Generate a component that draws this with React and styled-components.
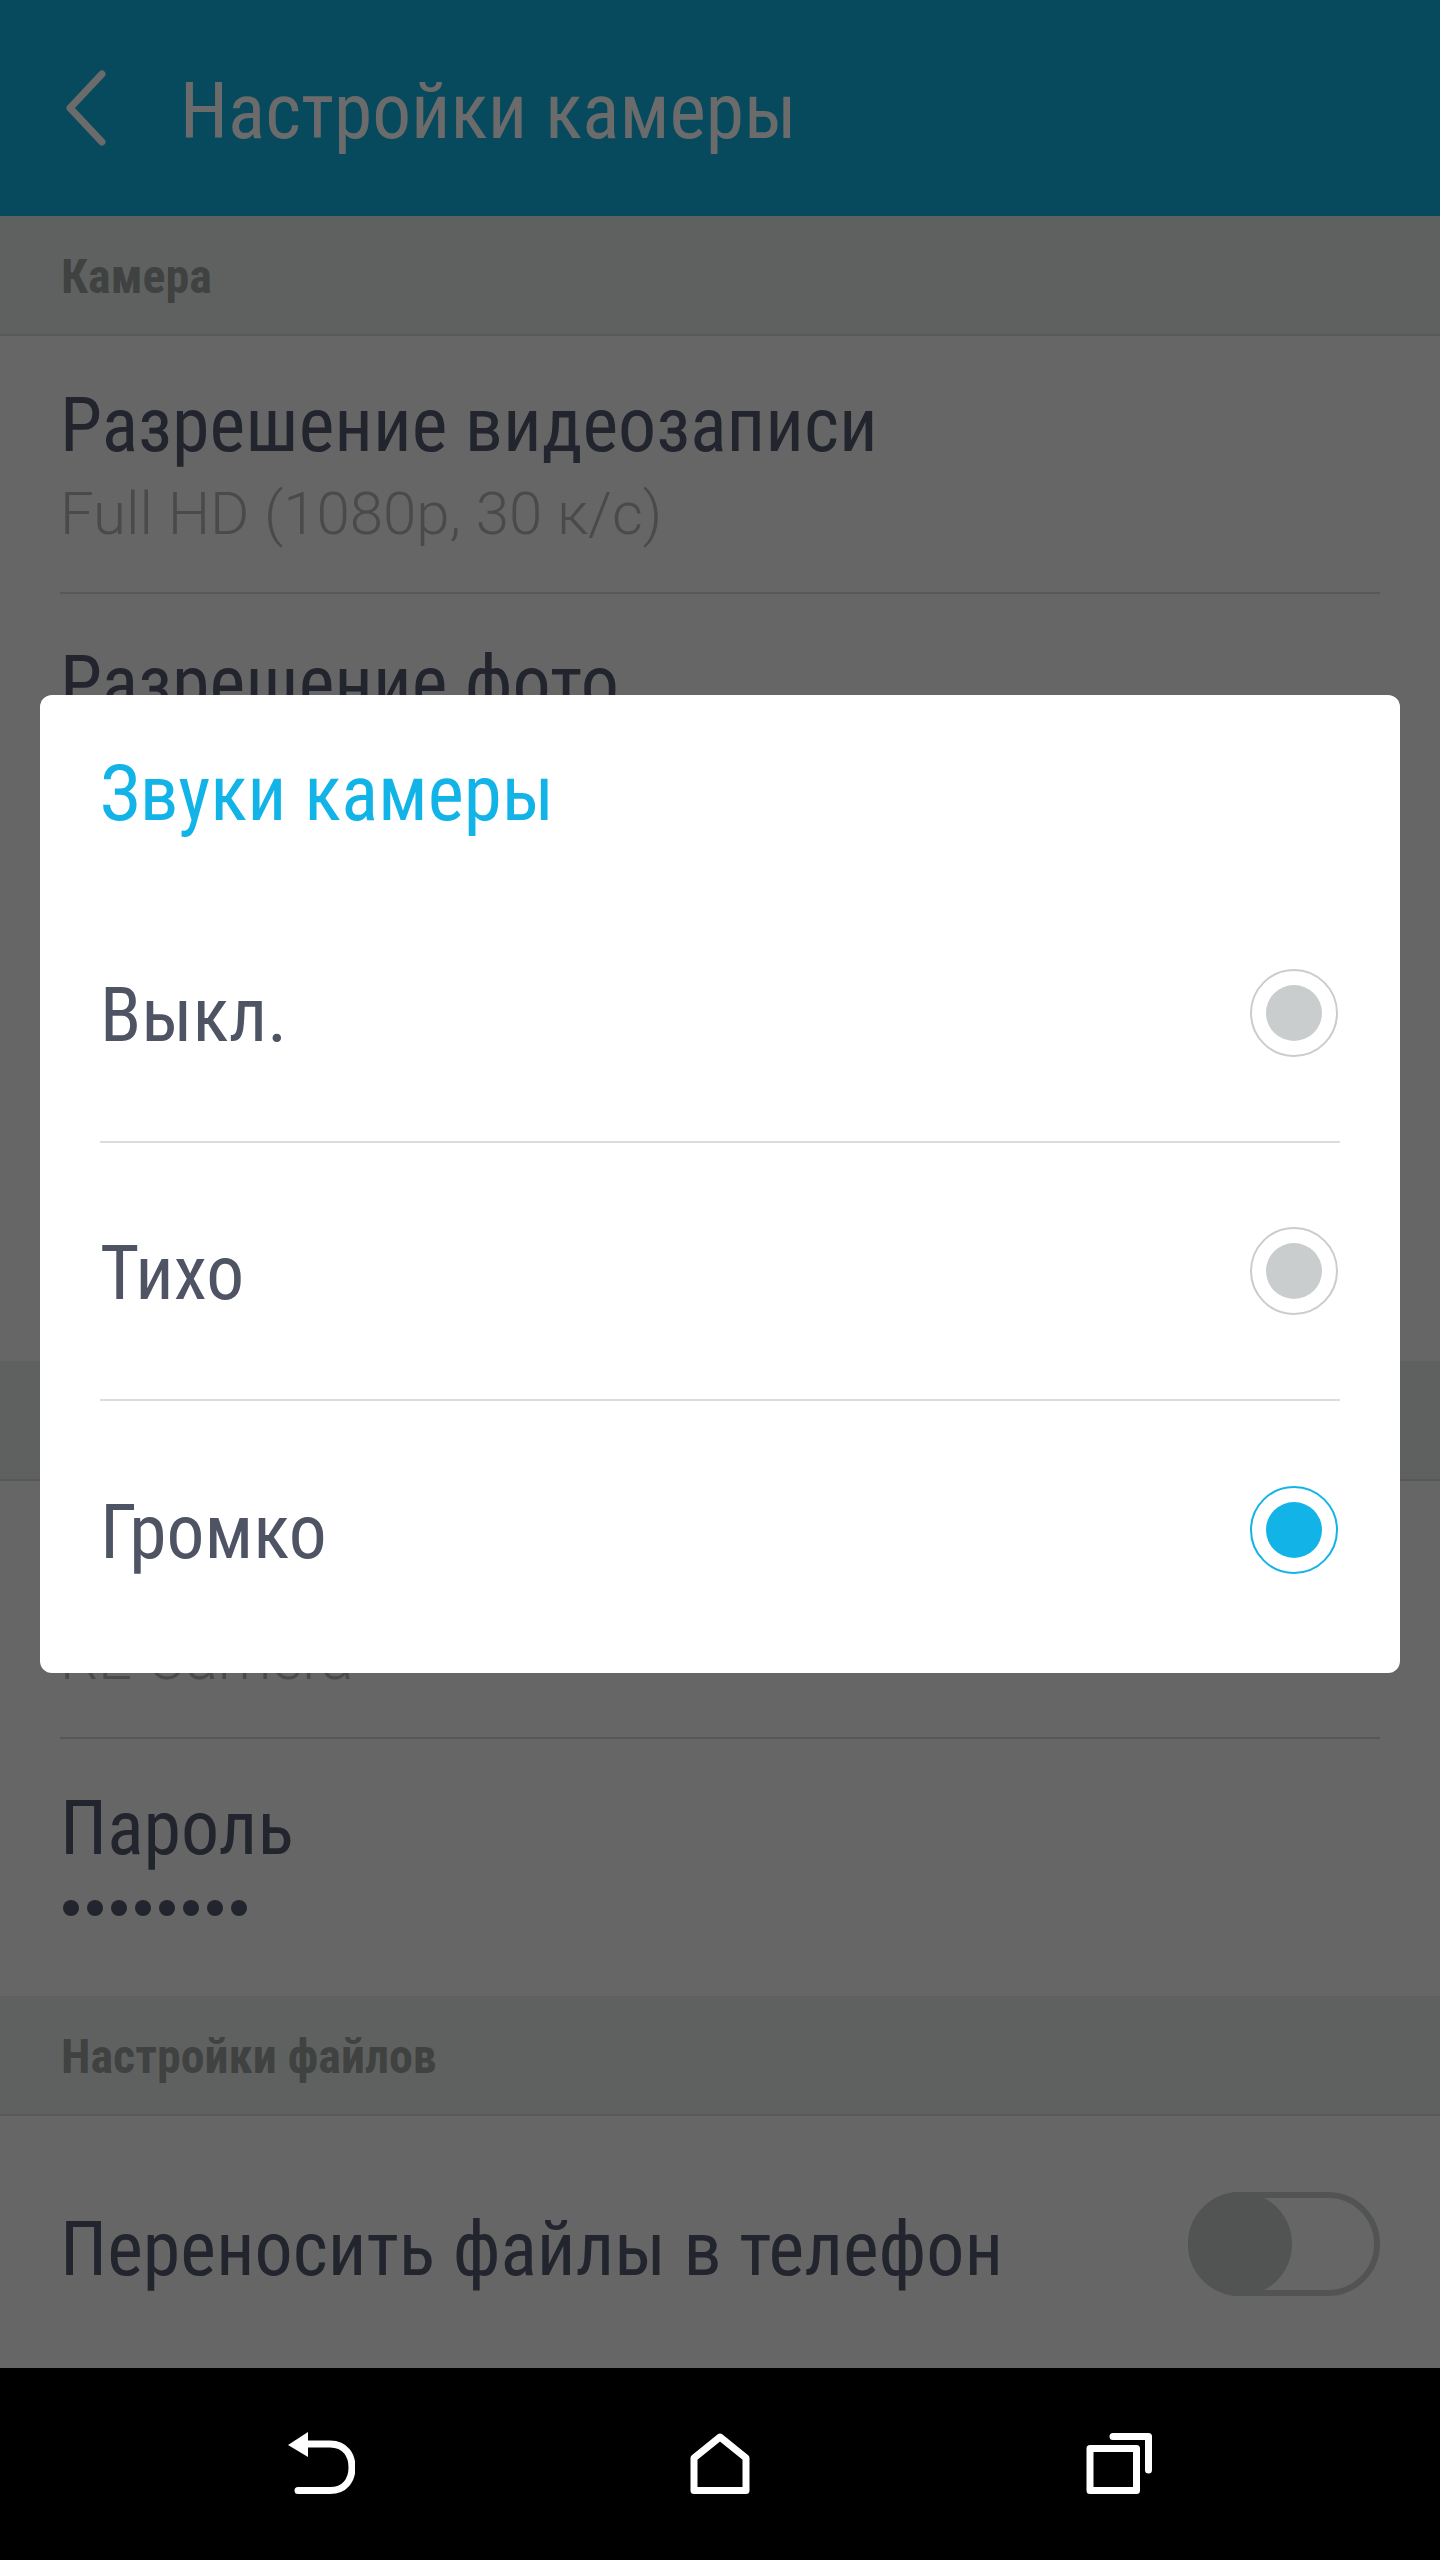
import React from "react";
import styled, { createGlobalStyle } from "styled-components";

const Global = createGlobalStyle`
  html, body { margin: 0; padding: 0; background: #666; }
  * { box-sizing: border-box; }
`;
const Page = styled.div`
  position: relative; width: 1440px; height: 2560px; overflow: hidden;
  display: flex; flex-direction: column; background: #666666;
  font-family: Roboto, "Noto Sans", sans-serif; font-stretch: 75%;
`;
const Header = styled.header`
  height: 216px; flex: none; background: #074a5e; display: flex; align-items: center; padding-left: 64px; gap: 70px;
`;
const HeaderTitle = styled.h1`
  margin: 0; padding-top: 7px; font-size: 77.5px; font-weight: 400; line-height: 1; color: #6b6b6b;
`;
const Content = styled.main`flex: 1; display: flex; flex-direction: column;`;
const Section = styled.div`
  height: 120px; flex: none; background: #5f6160; border-bottom: 2px solid #585a59; padding: 34px 61px 0;
  font-size: 48px; font-weight: 700; line-height: 54px; color: #404241;
`;
const Row = styled.div`
  height: ${p => p.$h || 258}px; flex: none; margin: 0 60px; padding-top: 42px; border-bottom: ${p => p.$last ? 0 : "2px solid #585858"};
`;
const RowTitle = styled.div`font-size: 76px; line-height: 94px; color: #22252e;`;
const RowSub = styled.div`font-size: 60px; line-height: 84px; font-weight: 300; color: #4a4a4a; font-stretch: normal;`;
const Dots = styled.div`display: flex; gap: 8px; padding: 25px 3px 0;`;
const Dot = styled.span`width: 16px; height: 16px; border-radius: 50%; background: #22252e;`;
const SwitchRow = styled.div`
  height: 251px; flex: none; margin: 0 60px; padding-top: 5px; display: flex; align-items: center; justify-content: space-between;
`;
const SwitchLabel = styled(RowTitle)`padding-top: 10px;`;
const Switch = styled.div`
  position: relative; width: 192px; height: 104px; border-radius: 52px; border: 6px solid #525453;
`;
const Knob = styled.span`
  position: absolute; left: -6px; top: -6px; width: 104px; height: 104px; border-radius: 50%; background: #525453;
`;
const Nav = styled.nav`
  height: 192px; flex: none; background: #000; display: flex; justify-content: center; align-items: flex-start; gap: 335px; padding-top: 64px;
`;
const Dialog = styled.div`
  position: absolute; left: 40px; top: 695px; width: 1360px; height: 978px; background: #fff; border-radius: 12px; padding: 0 60px;
`;
const DialogTitle = styled.h2`
  margin: 0; height: 190px; padding-top: 57px; font-size: 77px; font-weight: 400; line-height: 84px; color: #12b4e8;
`;
const Option = styled.div`
  height: 258px; display: flex; align-items: center; justify-content: space-between; padding-right: 2px;
  font-size: 75.5px; color: #4f5465; border-bottom: ${p => p.$last ? 0 : "2px solid #dcdcdc"};
`;
const OptionLabel = styled.span`padding-top: 4px;`;
const Radio = styled.span`
  width: 88px; height: 88px; border-radius: 50%; display: flex; align-items: center; justify-content: center;
  border: 2px solid ${p => p.$on ? "#12b4e8" : "#c9cdcd"};
  &::after { content: ""; width: 56px; height: 56px; border-radius: 50%; background: ${p => p.$on ? "#12b4e8" : "#c9cdcd"}; }
`;
const Svg = styled.svg`
  display: block; fill: none; stroke: ${p => p.$c || "#fff"}; stroke-width: 7; stroke-linecap: round; stroke-linejoin: round;
`;

export default function App() {
  return (
    <Page>
      <Global />
      <Header>
        <Svg width="46" height="76" viewBox="0 0 46 76" $c="#6b6b6b">
          <path d="M38 4 L6 38 L38 72" />
        </Svg>
        <HeaderTitle>Настройки камеры</HeaderTitle>
      </Header>
      <Content>
        <Section>Камера</Section>
        <Row><RowTitle>Разрешение видеозаписи</RowTitle><RowSub>Full HD (1080p, 30 к/с)</RowSub></Row>
        <Row $h={256}><RowTitle>Разрешение фото</RowTitle></Row>
        <Row $h={256} />
        <Row $h={255} $last />
        <Section />
        <Row><RowTitle>&nbsp;</RowTitle><RowSub>RE Camera</RowSub></Row>
        <Row $h={257} $last>
          <RowTitle>Пароль</RowTitle>
          <Dots>{Array.from({ length: 8 }, (_, i) => <Dot key={i} />)}</Dots>
        </Row>
        <Section>Настройки файлов</Section>
        <SwitchRow>
          <SwitchLabel>Переносить файлы в телефон</SwitchLabel>
          <Switch><Knob /></Switch>
        </SwitchRow>
      </Content>
      <Nav>
        <Svg width="68" height="62" viewBox="287 2432 68 62">
          <path d="M305 2444 H330 C346 2444 352 2456 352 2467.5 C352 2480 345 2490.5 330 2490.5 H298" />
          <path d="M288 2445 L308 2432 V2457 Z" fill="#fff" stroke="none" />
        </Svg>
        <Svg width="60" height="62" viewBox="690 2432 60 62">
          <path d="M694 2458 L720 2437 L746 2458 V2490.5 H694 Z" />
        </Svg>
        <Svg width="68" height="62" viewBox="1086 2432 68 62">
          <path d="M1091 2448.5 H1137.5 V2490.5 H1091 Z" />
          <path d="M1114 2436.5 H1149.5 V2470" />
        </Svg>
      </Nav>
      <Dialog>
        <DialogTitle>Звуки камеры</DialogTitle>
        <Option><OptionLabel>Выкл.</OptionLabel><Radio /></Option>
        <Option><OptionLabel>Тихо</OptionLabel><Radio /></Option>
        <Option $last><OptionLabel>Громко</OptionLabel><Radio $on /></Option>
      </Dialog>
    </Page>
  );
}
